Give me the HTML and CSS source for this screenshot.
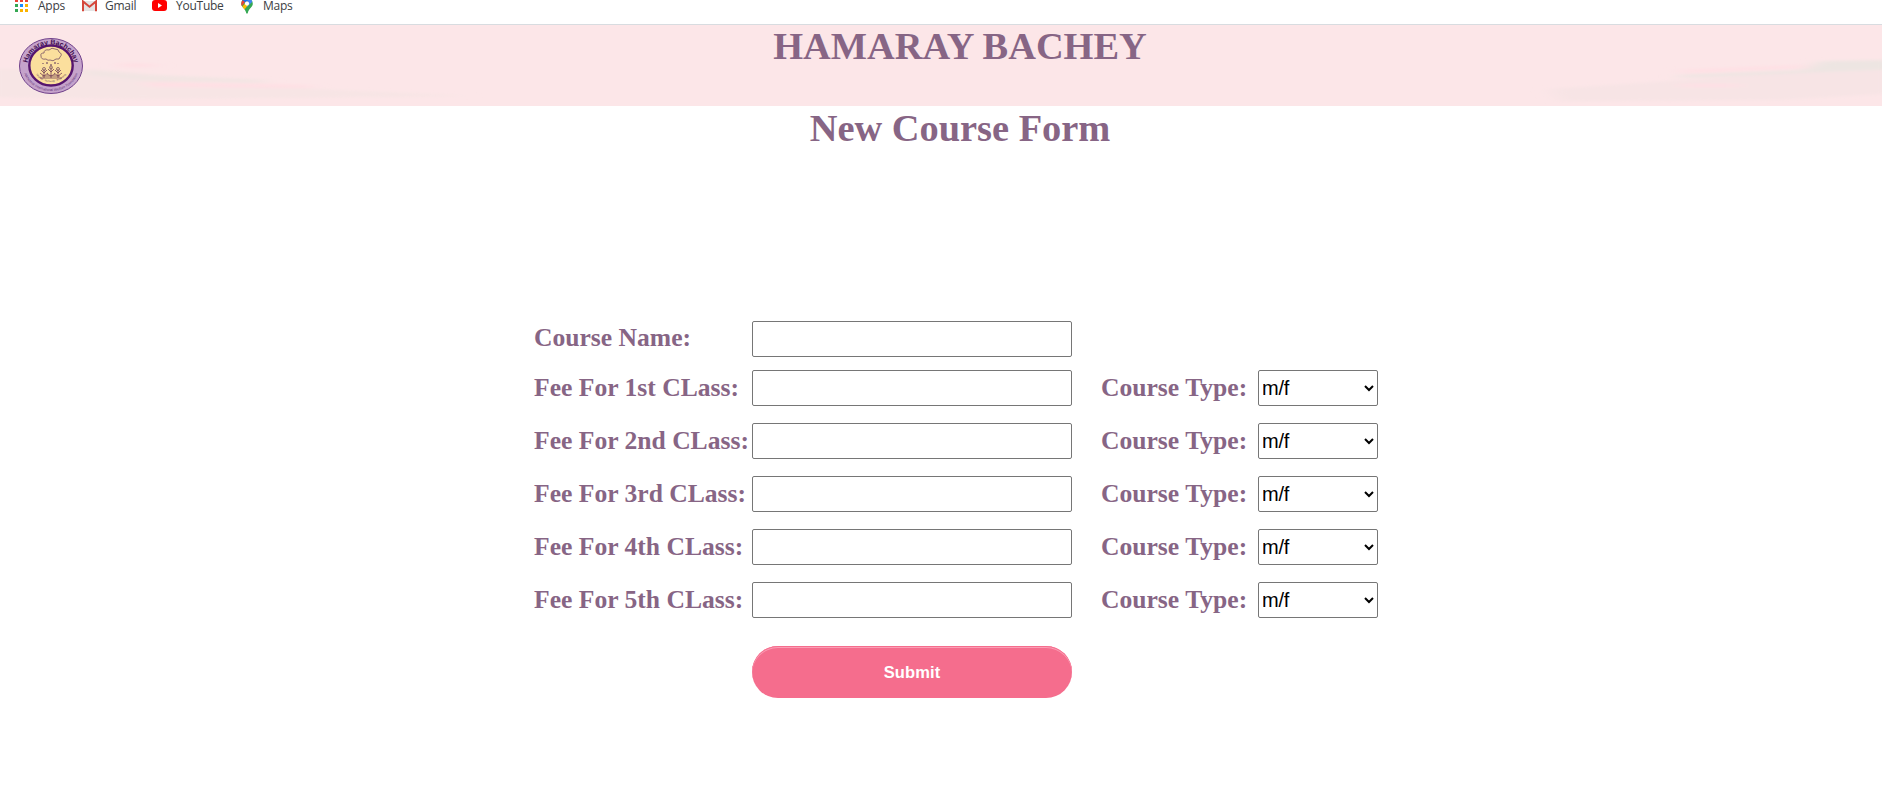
FILE: index.html
```html
<!DOCTYPE html>
<html lang="en">
<head>
<meta charset="utf-8">
<title>New Course Form</title>
<link rel="stylesheet" href="styles.css">
</head>
<body>
<nav class="bookmarks">
  <a class="bookmark apps"><svg class="icon" width="13" height="13" viewBox="0 0 13 13" shape-rendering="crispEdges"><path fill="#ea4335" d="M0 0h3v3H0zM5 0h3v3H5zM10 0h3v3h-3z"/><path fill="#34a853" d="M0 5h3v3H0zM0 10h3v3H0z"/><path fill="#1a8cff" d="M5 5h3v3H5z"/><path fill="#fbb300" d="M10 5h3v3h-3zM5 10h3v3H5zM10 10h3v3h-3z"/></svg><span>Apps</span></a>
  <a class="bookmark gmail"><svg class="icon" width="15" height="12" viewBox="0 0 15 12"><path fill="#e4e4e4" d="M1 1h13v10H1z"/><path fill="none" stroke="#d5473b" stroke-width="2" d="M1 11.3V1.4l6.5 5.3L14 1.4v9.9"/></svg><span>Gmail</span></a>
  <a class="bookmark youtube"><svg class="icon" width="15" height="11" viewBox="0 0 15 11"><rect width="15" height="11" rx="3" fill="#f00"/><path fill="#fff" d="M6 3v5l4-2.5z"/></svg><span>YouTube</span></a>
  <a class="bookmark maps"><svg class="icon" width="12" height="16" viewBox="0 0 12 16"><defs><clipPath id="pin"><path d="M6 0a5.8 5.8 0 0 1 5.8 5.8C11.800 9.500 7.500 10.500 6.800 15q-.8 1.300-1.600 0C4.500 10.500.2 9.500.2 5.800A5.800 5.800 0 0 1 6 0z"/></clipPath></defs><g clip-path="url(#pin)"><path fill="#34a853" d="M0 0h12v16H0z"/><path fill="#4285f4" d="M2 0h10v3L6 9z"/><path fill="#1a73e8" d="M0 0h5l2 3-5 3z"/><path fill="#ea4335" d="M0 1l4 3-3 4-1 0z"/><path fill="#fbbc04" d="M1 9l5-6 2 3-5 6z"/></g><circle cx="6" cy="5.600" r="2.100" fill="#fff"/></svg><span>Maps</span></a>
</nav>
<header class="banner">
  <svg class="waves" viewBox="0 0 1882 81" preserveAspectRatio="none">
    <defs><filter id="soft" x="-10%" y="-50%" width="120%" height="200%"><feGaussianBlur stdDeviation="9 1.500"/></filter></defs>
    <g filter="url(#soft)">
      <path fill="#f7e5e5" d="M-20 44L90 44l100 14 130 6 150 7-180 2-150 1-160-2z"/>
      <path fill="#f2e5e3" d="M85 44l70 6 110 5v3l-120-2-60-6z"/>
      <path fill="#ffdfe4" d="M140 57l170 3v3l-160-1zM120 38l35 1v3h-35z"/>
      <path fill="#f7e4e5" d="M1550 64l120-8 130-10 100-12v34l-120 7-220 1z"/>
      <path fill="#ede5e2" d="M1680 50l125-5 15-9 80-1v9l-80 3-140 6z"/>
      <path fill="#ffdfe4" d="M1680 45l125-5v3l-120 5zM1680 59h60v3h-60z"/>
    </g>
  </svg>
  <svg class="logo" width="66" height="58" viewBox="0 0 66 58">
    <defs><path id="upper" d="M10 24.500A23.500 21.500 0 0 1 56 24.500"/><path id="lower" d="M5 29A28 25 0 0 0 61 29"/><path id="motto" d="M15 28A18 17 0 0 0 51 28"/></defs>
    <ellipse cx="33" cy="29" rx="31.500" ry="27.500" fill="#c5a3cb" stroke="#70418b"/>
    <ellipse cx="33" cy="28.500" rx="21.700" ry="20" fill="#fbdf9d" stroke="#56156e" stroke-width="2.400"/>
    <text class="logo-name"><textPath href="#upper" startOffset="50%" text-anchor="middle">Hamaray Bachchay</textPath></text>
    <text class="logo-ring"><textPath href="#lower" startOffset="50%" text-anchor="middle">Alkhidmat International Welfare Foundation</textPath></text>
    <text class="logo-motto"><textPath href="#motto" startOffset="50%" text-anchor="middle">Healing · Nurturing · Protecting</textPath></text>
    <g fill="none" stroke="#765064" stroke-width=".8">
      <path d="M28 22q-5 1-5-3-1-3 3-3 0-4 5-3 3-3 6-1 4 0 4 3 4 2 1 5 0 3-4 2-3 3-6 1-2 1-4-1z"/>
      <path d="M25 26v1M29 25v2M33 27v2M37 25v2M40 26v1" stroke-width="1.200"/>
      <path d="M22 41h22M24 39h18M26 41v-9M23 33l3 3 3-3M22 36l4 3 4-3M33 41V30M30 32l3 3 3-3M29 37l4 2 4-2M40 41v-9M37 33l3 3 3-3M36 36l4 3 4-3" stroke="#754056"/>
      <circle cx="26" cy="32" r="1.500"/><circle cx="33" cy="30.500" r="1.500"/><circle cx="40" cy="32" r="1.500"/>
    </g>
  </svg>
  <h1 class="brand">HAMARAY BACHEY</h1>
</header>
<main>
  <h1 class="title">New Course Form</h1>
  <form class="course-form">
    <label class="name">Course Name:</label><input class="field" type="text"><span></span><span></span>
    <label>Fee For 1st CLass:</label><input class="field" type="text"><label>Course Type:</label><select class="choice"><option>m/f</option></select>
    <label>Fee For 2nd CLass:</label><input class="field" type="text"><label>Course Type:</label><select class="choice"><option>m/f</option></select>
    <label>Fee For 3rd CLass:</label><input class="field" type="text"><label>Course Type:</label><select class="choice"><option>m/f</option></select>
    <label>Fee For 4th CLass:</label><input class="field" type="text"><label>Course Type:</label><select class="choice"><option>m/f</option></select>
    <label>Fee For 5th CLass:</label><input class="field" type="text"><label>Course Type:</label><select class="choice"><option>m/f</option></select>
    <button class="submit" type="button">Submit</button>
  </form>
</main>
</body>
</html>
```
FILE: styles.css
```css
* { box-sizing: border-box; }
body { margin: 0; background: #fff; color: #876585; font-family: "Liberation Serif", "Times New Roman", serif; overflow: hidden; }
.bookmarks { height: 25px; border-bottom: 1px solid #d8dce0; display: flex; align-items: flex-start; padding-left: 15px; font: 12px/12px "Open Sans", "Noto Sans", sans-serif; letter-spacing: -.25px; color: #3c4043; }
.bookmark { display: flex; height: 16px; }
.icon { flex: none; }
.apps { width: 67px; gap: 10px; }
.apps .icon { margin-top: -1px; }
.gmail { width: 70px; gap: 8px; }
.youtube { width: 89px; gap: 9px; }
.maps { gap: 10px; }
.maps .icon { margin-top: -2px; }
.banner { position: relative; height: 81px; background: #fce6e8; display: grid; overflow: hidden; }
.waves { position: absolute; inset: 0; width: 100%; height: 100%; }
.logo { position: absolute; left: 18px; top: 12px; }
.logo-name { font: bold 7px "Liberation Sans", sans-serif; fill: #431050; }
.logo-ring { font: 3.500px "Liberation Sans", sans-serif; fill: #64357a; }
.logo-motto { font: 2.500px "Liberation Sans", sans-serif; fill: #66405f; }
h1 { margin: 0; text-align: center; font-weight: bold; }
.brand { position: relative; padding-left: 38px; font-size: 38.4px; line-height: 42px; }
.title { padding-left: 38px; font-size: 38.4px; line-height: 44px; }
.course-form { width: 844px; margin: 171px 0 0 534px; display: grid; grid-template-columns: 218px 349px 157px 120px; grid-template-rows: 49px repeat(4, 53px) 64px 52px; align-items: start; font-size: 25.6px; font-weight: bold; }
.course-form label { line-height: 36px; white-space: nowrap; }
.course-form .name { line-height: 34px; }
.field { width: 320px; height: 36px; margin: 0; border: 1px solid #767676; border-radius: 2px; background: #fff; }
.choice { width: 120px; height: 36px; margin: 0; padding: 0; border: 1px solid #767676; border-radius: 2px; background-color: #fff; color: #000; font: 20px "Liberation Sans", Arial, sans-serif; letter-spacing: -.2px; text-indent: -1px; }
.submit { grid-column: 2; width: 320px; height: 52px; border: 0; border-radius: 26px; background: #f56d8d; box-shadow: inset 0 1px #f56d8d, inset 0 2px #fb9db4; color: #fff; font: bold 16.500px "Liberation Sans", Arial, sans-serif; letter-spacing: .1px; }
```
